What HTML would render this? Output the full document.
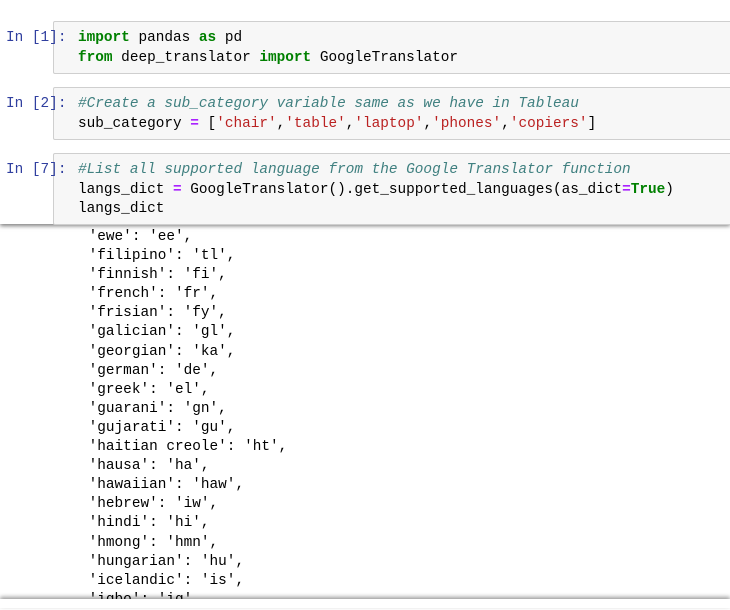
<!DOCTYPE html>
<html><head><style>
body{margin:0;width:730px;height:608px;background:#fff;overflow:hidden;position:relative;font-family:"Liberation Mono",monospace;font-size:14.4px;}
.p{position:absolute;left:6px;color:#303f9f;line-height:19px;}
.c{position:absolute;left:53px;right:-5px;background:#f7f7f7;border:1px solid #cfcfcf;border-radius:2px;}
.t{position:absolute;left:78px;line-height:19.5px;white-space:pre;color:#000;}
.k{color:#008000;font-weight:bold}.s{color:#ba2121}.o{color:#aa22ff;font-weight:bold}.cm{color:#408080;font-style:italic}
.out{position:absolute;left:80px;top:228px;line-height:19.1px;white-space:pre;color:#000;}
</style></head><body>
<div class="out"> 'ewe': 'ee',
 'filipino': 'tl',
 'finnish': 'fi',
 'french': 'fr',
 'frisian': 'fy',
 'galician': 'gl',
 'georgian': 'ka',
 'german': 'de',
 'greek': 'el',
 'guarani': 'gn',
 'gujarati': 'gu',
 'haitian creole': 'ht',
 'hausa': 'ha',
 'hawaiian': 'haw',
 'hebrew': 'iw',
 'hindi': 'hi',
 'hmong': 'hmn',
 'hungarian': 'hu',
 'icelandic': 'is',
 'igbo': 'ig',</div>
<div style="position:absolute;left:0;right:0;top:0;height:224px;background:#fff;box-shadow:0 2px 4px rgba(0,0,0,0.5)"></div>
<div class="c" style="top:21px;height:51px"></div>
<div class="p" style="top:29px">In [1]:</div>
<div class="t" style="top:29px"><span class="k">import</span> pandas <span class="k">as</span> pd
<span class="k">from</span> deep_translator <span class="k">import</span> GoogleTranslator</div>
<div class="c" style="top:87px;height:51px"></div>
<div class="p" style="top:95px">In [2]:</div>
<div class="t" style="top:95px"><span class="cm">#Create a sub_category variable same as we have in Tableau</span>
sub_category <span class="o">=</span> [<span class="s">'chair'</span>,<span class="s">'table'</span>,<span class="s">'laptop'</span>,<span class="s">'phones'</span>,<span class="s">'copiers'</span>]</div>
<div class="c" style="top:153px;height:70px"></div>
<div class="p" style="top:161px">In [7]:</div>
<div class="t" style="top:161px"><span class="cm">#List all supported language from the Google Translator function</span>
langs_dict <span class="o">=</span> GoogleTranslator().get_supported_languages(as_dict<span class="o">=</span><span class="k">True</span>)
langs_dict</div>
<div style="position:absolute;left:0;right:0;top:599px;height:9px;background:#fff;box-shadow:0 -2px 4px rgba(0,0,0,0.4)"></div>
</body></html>
